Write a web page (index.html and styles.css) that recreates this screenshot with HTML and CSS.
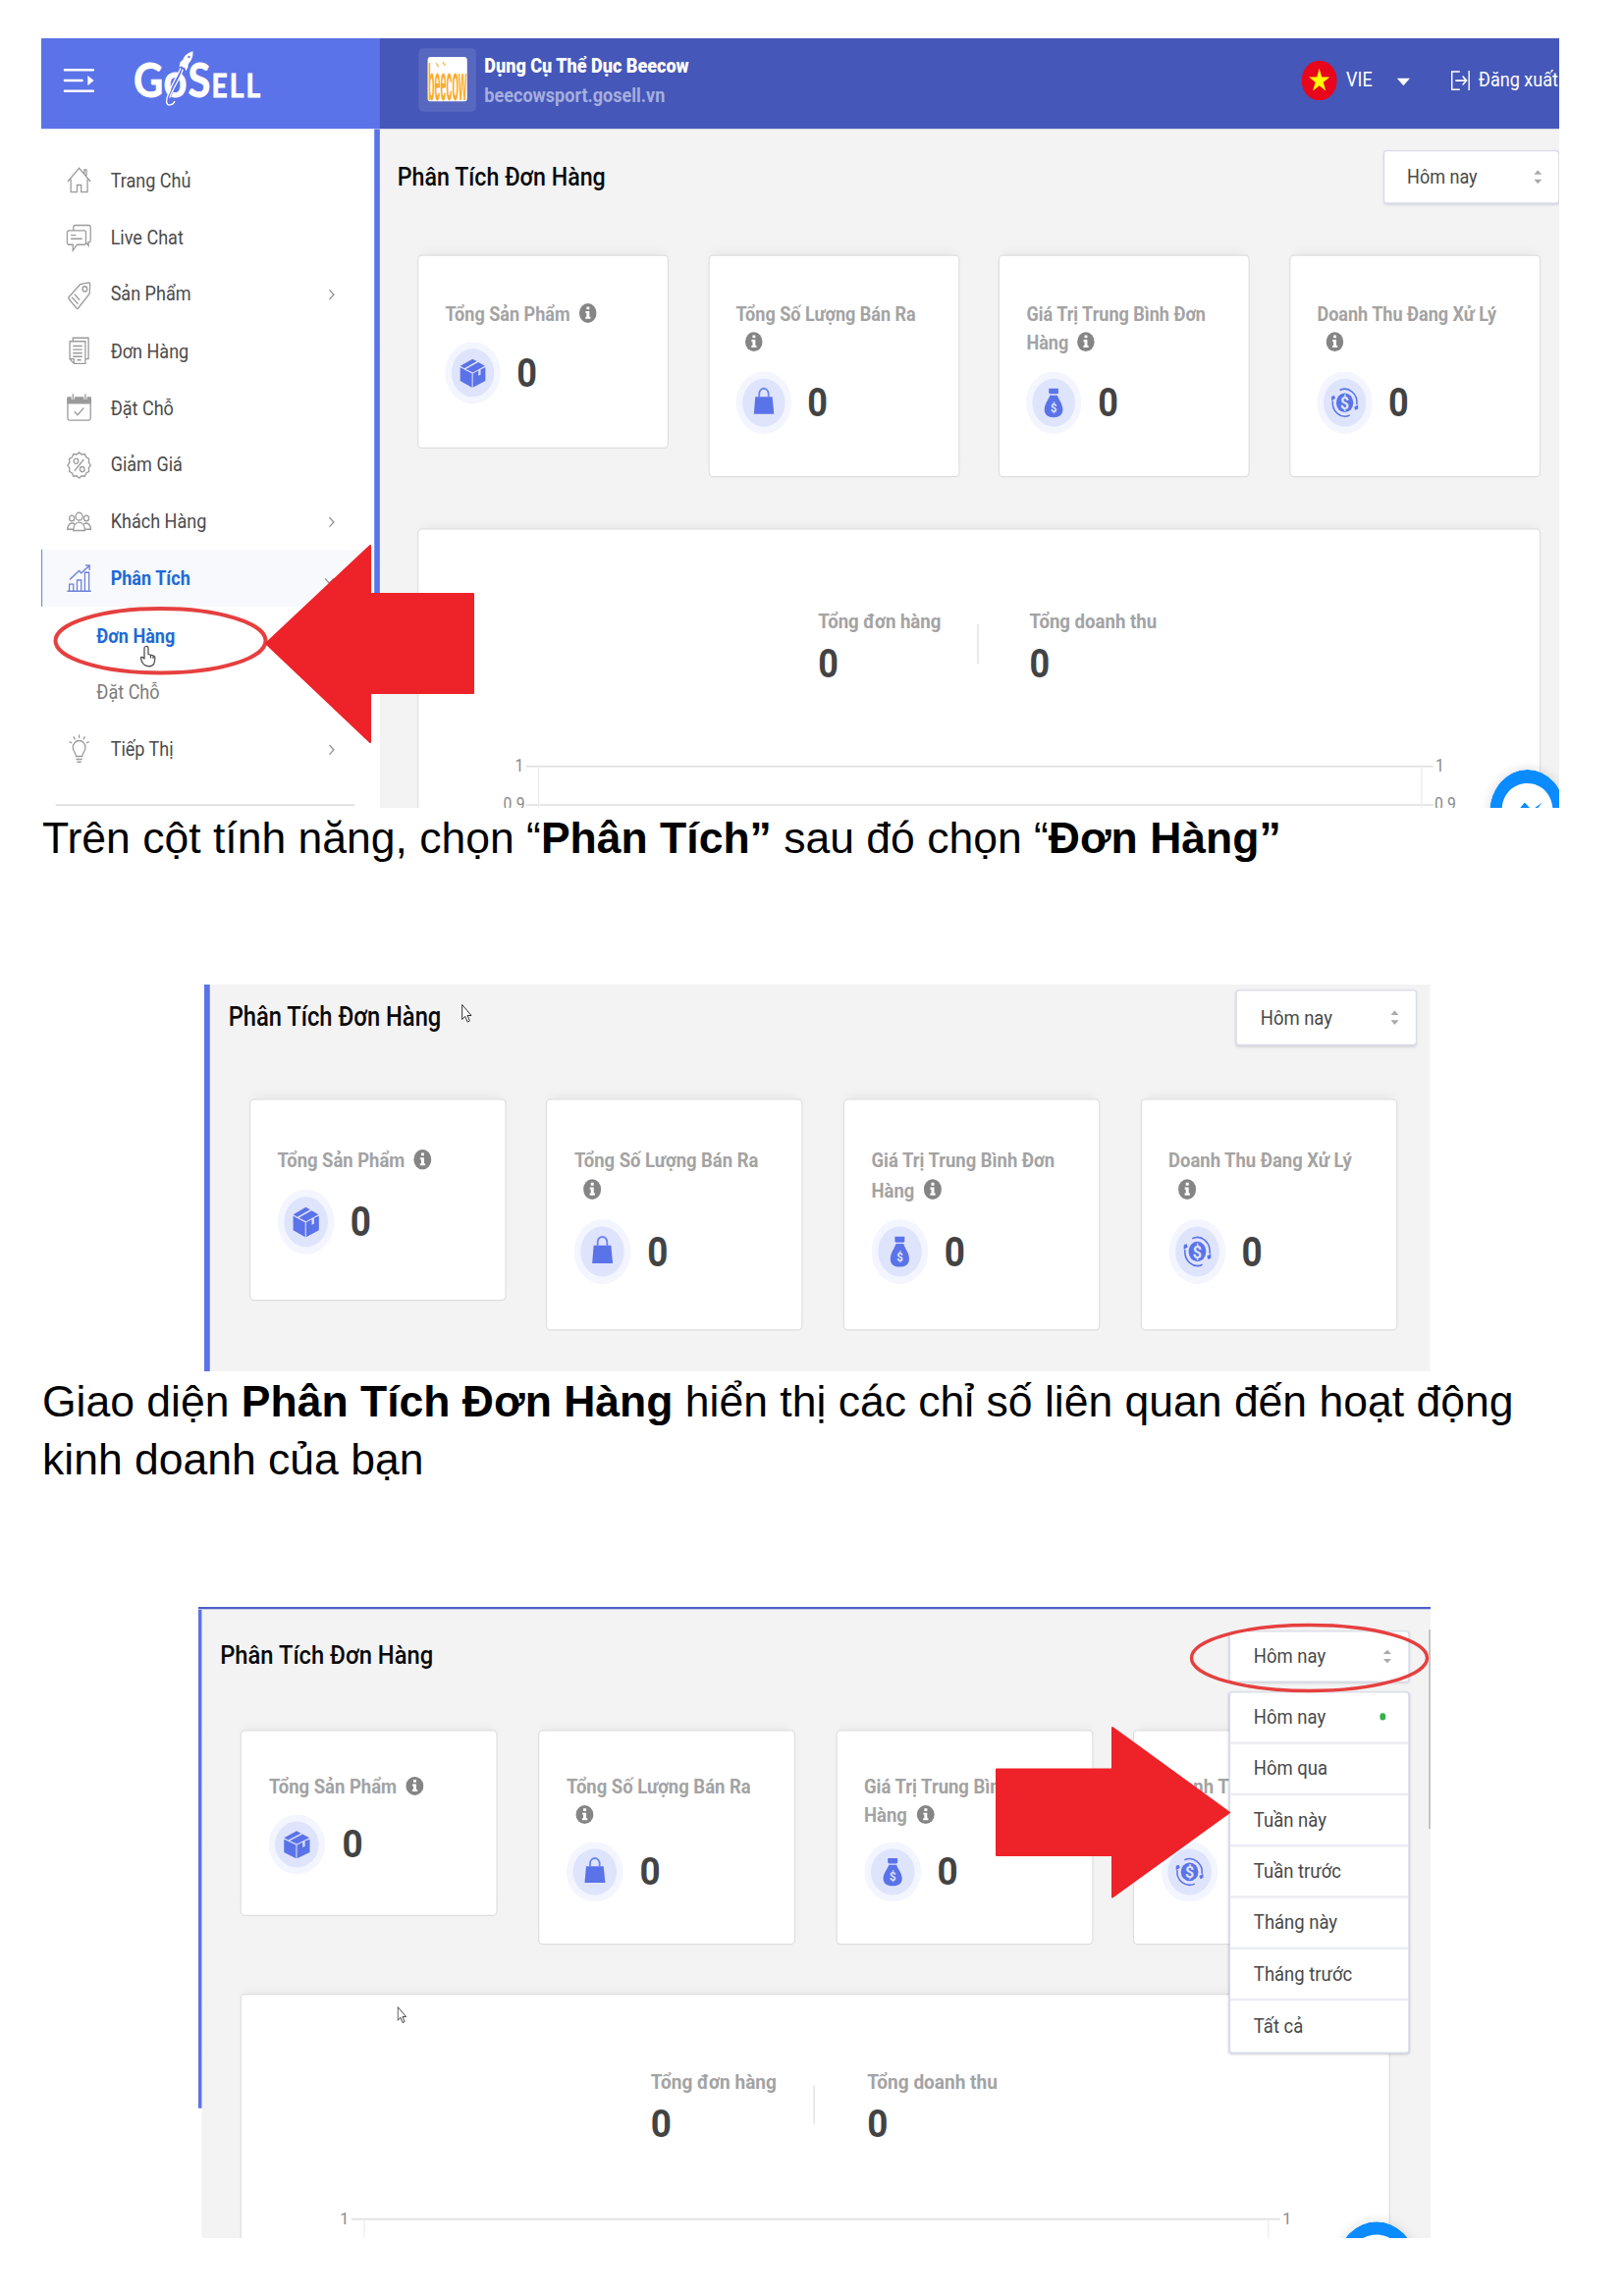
FILE: index.html
```html
<!DOCTYPE html>
<html lang="vi">
<head>
<meta charset="utf-8">
<title>GoSell – Phân Tích Đơn Hàng</title>
<link rel="stylesheet" href="styles.css">
</head>
<body>
<svg class="sprite" width="0" height="0" aria-hidden="true">
  <symbol id="info" viewBox="0 0 16 16"><circle cx="8" cy="8" r="7.8" fill="#858585"/><path fill="#fff" d="M6.8 2.8h2.6v2.2H6.8zM5.9 6.4h3.5v4.6h1v1.6H5.8V11h1V8h-.9z"/></symbol>
  <symbol id="halo" viewBox="0 0 50 50"><circle cx="25" cy="25" r="25" fill="#f3f5ff"/><circle cx="25" cy="25" r="19.3" fill="#dfe4fd"/></symbol>
  <symbol id="box" viewBox="0 0 50 50"><use href="#halo"/><path fill="#5b73e8" d="M24.8 13.800 28.600 15.700 17.300 21.300l-3.600-1.900zM30 16.400l6 3-11 5.300-6.300-2.800zM13.600 20.600l10.600 4.900v11.300l-10.600-5.300zM36.400 20.600v10.900l-11.300 5.300V25.500l5-2.400v4.300l2-.9v-4.400z"/></symbol>
  <symbol id="bag" viewBox="0 0 50 50"><use href="#halo"/><path fill="#5b73e8" d="M17.300 20.300h15.400L34.200 34H16z"/><path fill="none" stroke="#6f84ee" stroke-width="1.600" d="M20.800 21v-3.200a4.200 4.200 0 0 1 8.400 0V21"/></symbol>
  <symbol id="money" viewBox="0 0 50 50"><use href="#halo"/><path fill="#5b73e8" d="M20.600 13.500h8.600v3.800l-1 .7h-6.600l-1-.7zM21.600 19h6.600c1.600 4 5 7 5 11.600 0 4.200-3.300 6.200-8.300 6.200s-8.300-2-8.300-6.200C16.600 26 20 23 21.600 19z"/></symbol>
  <symbol id="revenue" viewBox="0 0 50 50"><use href="#halo"/><circle cx="25" cy="25" r="7.700" fill="#5b73e8"/><g fill="none" stroke="#5b73e8" stroke-width="1.300"><path d="M20.500 15A11 11 0 0 1 35.900 26.500M29.500 35A11 11 0 0 1 14.100 23.500"/></g><path fill="#5b73e8" d="m33.500 28.500 3.500-2v3.500l-2.500 1zM16.500 21.500l-3.500 2V20l2.500-1z"/></symbol>
  <symbol id="pointer" viewBox="0 0 11 20"><path fill="#fff" stroke="#333" stroke-width="1" d="M.7 1v15l3-3.200 2.500 5.800 2.200-1.200L6 12h4z"/></symbol>
</svg>

<main class="doc">
  <!-- Step 1: sidebar navigation -->
  <figure class="shot shot-1">
    <div class="screen">
      <header class="topbar">
        <div class="brand">
          <svg class="burger" width="28" height="20" viewBox="0 0 28 20"><g stroke="#fff" stroke-width="2" stroke-linecap="round"><path d="M1 1.500h26M1 10h16M1 18.500h26"/></g><path fill="#fff" d="m22 6 5.500 4-5.500 4z"/></svg>
          <div class="logo"><span class="lg">G</span><span class="lg lo">o</span><span class="lg">S</span><span class="sm">ELL</span>
            <svg class="rocket" width="26" height="45" viewBox="0 0 26 45"><path fill="none" stroke="#5b73e8" stroke-width="2.400" d="M15 15C11 24 5 33 3 40"/><path fill="none" stroke="#fff" stroke-width="1.100" d="M14 14C9 24 1 34 1.200 41c.5 4 6 3 7.500-.5M16 15C13 24 6 31 4 38"/><path fill="#fff" d="M25 .5c-4 .8-7.500 3.200-8.800 6.500l-2.700 2.300-.8 4 2-1 1.500 1.200 1.800.6.600 2.400 2-3 .3-2.800C24 8 25.500 4 25 .5z"/><circle cx="21.500" cy="5" r="1" fill="#5b73e8"/></svg>
          </div>
        </div>
        <div class="shop">
          <div class="avatar"><svg width="36" height="36" viewBox="0 0 36 36"><rect width="36" height="36" rx="3" fill="#fff"/><g transform="translate(.5 35) scale(1 3.100)"><text x="0" y="0" textLength="35" lengthAdjust="spacingAndGlyphs" class="beecow">beecow</text></g><path stroke="#fbb84a" stroke-width="1.200" d="m8 5 2 3M14 4l2 3"/></svg></div>
          <div class="shop-text"><b>Dụng Cụ Thể Dục Beecow</b><span>beecowsport.gosell.vn</span></div>
        </div>
        <div class="account">
          <svg class="flag" width="32" height="32" viewBox="0 0 32 32"><circle cx="16" cy="16" r="16" fill="#e8061c"/><path fill="#ff0" d="m16 6.300 2.200 6.900h7.200l-5.800 4.200 2.200 6.900-5.800-4.300-5.800 4.300 2.200-6.900-5.800-4.200h7.200z"/></svg>
          <span class="lang">VIE</span>
          <svg class="caret" width="12" height="6" viewBox="0 0 12 6"><path fill="#fff" d="M0 0h12L6 6z"/></svg>
          <svg class="exit" width="17" height="16" viewBox="0 0 17 16"><path fill="none" stroke="#fff" stroke-width="1.300" d="M8 .8H.8v14.400H8M4 8h10M10.500 4.500 14 8l-3.500 3.500M16.300 0v16"/></svg>
          <span>Đăng xuất</span>
        </div>
      </header>
      <div class="body">
        <nav class="side">
          <a><svg viewBox="0 0 24 24"><path d="M1 13 12 1.500 23 13M4 11v11h6v-6h4v6h6V11M17 6V3h2v5"/></svg>Trang Chủ</a>
          <a><svg viewBox="0 0 24 24"><path d="M2 6h15a1.500 1.500 0 0 1 1.500 1.500v9A1.500 1.500 0 0 1 17 18h-7l-4 5v-5H2a1.500 1.500 0 0 1-1.500-1.500v-9A1.500 1.500 0 0 1 2 6zM6.500 6V3A1.500 1.500 0 0 1 8 1.500h13.500A1.500 1.500 0 0 1 23 3v11.500a1.500 1.500 0 0 1-1.500 1.500H21v3l-2.500-3M4 10h5M4 13h11"/></svg>Live Chat</a>
          <a><svg viewBox="0 0 24 24"><path d="M13 3l8-1.500c1 0 1.500.5 1.500 1.500l-.500 8L11 23.500c-.5.500-1 .5-1.500 0l-7.500-8c-.5-.5-.5-1 0-1.500z"/><circle cx="17.500" cy="7" r="2.200"/><path d="m5 14 6 6M7.500 11.500l5 5"/></svg>Sản Phẩm<i></i></a>
          <a><svg viewBox="0 0 24 24"><path d="M3 4h15v19H7l-4-4zM3 19h4v4M6 4V1h15v18h-3M6 8h9M6 11h9M6 14h9M6 17h9M10 20h4"/></svg>Đơn Hàng</a>
          <a><svg viewBox="0 0 24 24"><path fill="#9a9a9a" d="M1 3h22v5H1z"/><path d="M1 4v17a1.500 1.500 0 0 0 1.500 1.500h19A1.500 1.500 0 0 0 23 21V4"/><path stroke="#fff" stroke-width="3" d="M6 0v4.500M18 0v4.500"/><path d="M6 0v4.500M18 0v4.500M7.500 15l3 3 6-6"/></svg>Đặt Chỗ</a>
          <a><svg viewBox="0 0 24 24"><path d="m12 1 2.500 1.800 3-.3 1.300 2.700 2.700 1.300-.3 3L23 12l-1.800 2.500.3 3-2.700 1.300-1.300 2.700-3-.3L12 23l-2.500-1.800-3 .3-1.300-2.700-2.700-1.300.3-3L1 12l1.800-2.500-.3-3 2.700-1.300 1.300-2.700 3 .3z"/><circle cx="9" cy="8.500" r="2.200"/><circle cx="15" cy="15.500" r="2.200"/><path d="m7.500 17 9-10"/></svg>Giảm Giá</a>
          <a><svg viewBox="0 0 24 24"><circle cx="12" cy="8" r="3.300"/><circle cx="5" cy="9.500" r="2.400"/><circle cx="19" cy="9.500" r="2.400"/><path d="M6.500 20c0-4 2-7 5.500-7s5.500 3 5.500 7zM7.500 14.500C4 12.500.8 15 .8 19H6M16.500 14.500c3.500-2 6.700.5 6.700 4.500H18"/></svg>Khách Hàng<i></i></a>
          <a class="on"><svg viewBox="0 0 24 24"><path d="M2.500 23v-6h4v6M10 23v-9.500h4V23M17.500 23V7h4v16M.5 23h23M3 13l9-7.500 2 2L22 1M18 .8h4V5"/></svg>Phân Tích<i class="down"></i></a>
          <a class="sub cur">Đơn Hàng</a>
          <a class="sub">Đặt Chỗ</a>
          <a><svg viewBox="0 0 24 24"><path d="M9 18.500c0-3-3-4-3-7.500a6 6 0 0 1 12 0c0 3.500-3 4.500-3 7.500zM9 21h6M10 23.300h4M12 0v3M6.500 1.500 8 4M17.500 1.500 16 4M2.500 6l2.500 1M21.500 6 19 7"/></svg>Tiếp Thị<i></i></a>
          <hr>
        </nav>
        <div class="rail"></div>
        <section class="main">
          <div class="head"><h1>Phân Tích Đơn Hàng</h1><div class="select">Hôm nay<svg width="7" height="11" viewBox="0 0 7 11"><path fill="#aaa" d="M0 3.500 3.500 0 7 3.500zM0 7.500h7L3.500 11z"/></svg></div></div>
          <div class="cards">
            <div class="card"><p>Tổng Sản Phẩm<svg class="info"><use href="#info"/></svg></p><div class="val"><svg><use href="#box"/></svg>0</div></div>
            <div class="card"><p>Tổng Số Lượng Bán Ra<svg class="info"><use href="#info"/></svg></p><div class="val"><svg><use href="#bag"/></svg>0</div></div>
            <div class="card"><p>Giá Trị Trung Bình Đơn Hàng<svg class="info"><use href="#info"/></svg></p><div class="val"><svg viewBox="0 0 50 50"><use href="#money"/><text x="25" y="32.500" class="coin coin-sm">$</text></svg>0</div></div>
            <div class="card"><p>Doanh Thu Đang Xử Lý<svg class="info"><use href="#info"/></svg></p><div class="val"><svg viewBox="0 0 50 50"><use href="#revenue"/><text x="25" y="30" class="coin">$</text></svg>0</div></div>
          </div>
          <div class="panel">
            <div class="stats"><div class="stat"><p>Tổng đơn hàng</p><b>0</b></div><div class="rule"></div><div class="stat"><p>Tổng doanh thu</p><b>0</b></div></div>
            <svg class="chart" width="1014" height="120" viewBox="0 0 1014 120"><path stroke="#dedede" stroke-width="1.200" d="M97 20.500h820M97 51.500h820"/><path stroke="#ebebeb" d="M108.500 21v99M906.500 21v99"/><text x="95" y="24.500" text-anchor="end">1</text><text x="919" y="24.500">1</text><text x="96" y="55.200" text-anchor="end">0.9</text><text x="918" y="55.200">0.9</text></svg>
          </div>
        </section>
      </div>
      <svg class="messenger" width="68" height="68" viewBox="0 0 68 68"><circle cx="34" cy="34" r="34" fill="#0a8cff"/><path fill="#fff" d="M34 11C20.500 11 11 20.500 11 33c0 7 3 12.500 8 16.500V58l7.500-4.200c2.300.7 4.800 1 7.500 1 13.500 0 23-9.500 23-21.800S47.500 11 34 11z"/><path fill="#0a8cff" d="m20.500 38.500 11-12 6.500 6 9.500-6-11 12-6.500-6z"/></svg>
    </div>
    <svg class="notes" width="1546" height="784" viewBox="42 39 1546 784">
      <ellipse cx="163.500" cy="652.700" rx="107" ry="32.700" fill="none" stroke="#e5403f" stroke-width="4"/>
      <path fill="#ee2229" stroke="#ee2229" stroke-width="2" stroke-linejoin="round" d="M271 655.500 377 556v49h105v101H377v50z"/>
      <path fill="#fff" stroke="#444" stroke-width="1.200" stroke-linejoin="round" d="M148.500 658.500c1.700-.5 2.500.5 2.500 2v6l5.500 1.500c1.200.5 1.600 1.500 1.400 3l-1 5c-1 2-2.500 2.800-5 2.800-4 0-6-1.500-7.500-5l-1-3.500c.5-1.600 2-1.200 3.600.8v-11c0-1 .5-1.500 1.500-1.600zM153.500 667.500v3M156 668.500v2.500"/>
    </svg>
  </figure>
  <p class="caption">Trên cột tính năng, chọn “<b>Phân Tích”</b> sau đó chọn “<b>Đơn Hàng”</b></p>

  <!-- Step 2: the indicator cards -->
  <figure class="shot shot-2">
    <div class="screen">
      <div class="body">
        <div class="rail"></div>
        <section class="main">
          <div class="head"><h1>Phân Tích Đơn Hàng</h1><div class="select">Hôm nay<svg width="7" height="11" viewBox="0 0 7 11"><path fill="#aaa" d="M0 3.500 3.500 0 7 3.500zM0 7.500h7L3.500 11z"/></svg></div></div>
          <div class="cards">
            <div class="card"><p>Tổng Sản Phẩm<svg class="info"><use href="#info"/></svg></p><div class="val"><svg><use href="#box"/></svg>0</div></div>
            <div class="card"><p>Tổng Số Lượng Bán Ra<svg class="info"><use href="#info"/></svg></p><div class="val"><svg><use href="#bag"/></svg>0</div></div>
            <div class="card"><p>Giá Trị Trung Bình Đơn Hàng<svg class="info"><use href="#info"/></svg></p><div class="val"><svg viewBox="0 0 50 50"><use href="#money"/><text x="25" y="32.500" class="coin coin-sm">$</text></svg>0</div></div>
            <div class="card"><p>Doanh Thu Đang Xử Lý<svg class="info"><use href="#info"/></svg></p><div class="val"><svg viewBox="0 0 50 50"><use href="#revenue"/><text x="25" y="30" class="coin">$</text></svg>0</div></div>
          </div>
        </section>
      </div>
    </div>
    <svg class="notes" width="1249" height="394" viewBox="208 1003 1249 394"><use href="#pointer" x="470" y="1022.500" width="11" height="20"/></svg>
  </figure>
  <p class="caption caption-2">Giao diện <b>Phân Tích Đơn Hàng</b> hiển thị các chỉ số liên quan đến hoạt động<br>kinh doanh của bạn</p>

  <!-- Step 3: the period menu -->
  <figure class="shot shot-3">
    <div class="screen">
      <div class="body">
        <div class="rail"></div>
        <section class="main">
          <div class="head"><h1>Phân Tích Đơn Hàng</h1>
            <div class="select">Hôm nay<svg width="7" height="11" viewBox="0 0 7 11"><path fill="#aaa" d="M0 3.500 3.500 0 7 3.500zM0 7.500h7L3.500 11z"/></svg>
              <ul class="menu"><li class="sel">Hôm nay</li><li>Hôm qua</li><li>Tuần này</li><li>Tuần trước</li><li>Tháng này</li><li>Tháng trước</li><li>Tất cả</li></ul>
            </div>
          </div>
          <div class="cards">
            <div class="card"><p>Tổng Sản Phẩm<svg class="info"><use href="#info"/></svg></p><div class="val"><svg><use href="#box"/></svg>0</div></div>
            <div class="card"><p>Tổng Số Lượng Bán Ra<svg class="info"><use href="#info"/></svg></p><div class="val"><svg><use href="#bag"/></svg>0</div></div>
            <div class="card"><p>Giá Trị Trung Bình Đơn Hàng<svg class="info"><use href="#info"/></svg></p><div class="val"><svg viewBox="0 0 50 50"><use href="#money"/><text x="25" y="32.500" class="coin coin-sm">$</text></svg>0</div></div>
            <div class="card"><p>Doanh Thu Đang Xử Lý<svg class="info"><use href="#info"/></svg></p><div class="val"><svg viewBox="0 0 50 50"><use href="#revenue"/><text x="25" y="30" class="coin">$</text></svg>0</div></div>
          </div>
          <div class="panel">
            <div class="stats"><div class="stat"><p>Tổng đơn hàng</p><b>0</b></div><div class="rule"></div><div class="stat"><p>Tổng doanh thu</p><b>0</b></div></div>
            <svg class="chart" width="1014" height="120" viewBox="0 0 1014 120"><path stroke="#dedede" stroke-width="1.200" d="M97 18h820"/><path stroke="#ebebeb" d="M108.500 19v101M906.500 19v101"/><text x="95" y="22.500" text-anchor="end">1</text><text x="919" y="22.500">1</text></svg>
          </div>
        </section>
      </div>
      <svg class="messenger" width="68" height="68" viewBox="0 0 68 68"><circle cx="34" cy="34" r="34" fill="#0a8cff"/><path fill="#fff" d="M34 11C20.500 11 11 20.500 11 33h46C57 20.500 47.500 11 34 11z"/></svg>
      <div class="scroll"></div>
    </div>
    <svg class="notes" width="1255" height="643" viewBox="202 1637 1255 643">
      <ellipse cx="1333.500" cy="1689" rx="120" ry="33.500" fill="none" stroke="#e5403f" stroke-width="3.400"/>
      <path fill="#ee2229" stroke="#ee2229" stroke-width="2" stroke-linejoin="round" d="M1252 1846.500 1133 1760v42.500h-118v87.500h118v42.500z"/>
      <use href="#pointer" x="404.500" y="2043.500" width="10" height="18.500"/>
    </svg>
  </figure>
</main>
</body>
</html>
```
FILE: styles.css
```css
* { box-sizing: border-box; }
body { margin: 0; background: #fff; font-family: Roboto, "Noto Sans", sans-serif; }
p, h1, ul, figure { margin: 0; padding: 0; }
.sprite { position: absolute; }
.doc { display: flow-root; height: 2339px; overflow: hidden; }

/* Each shot is laid out in app pixels, then stretched to its slot on the page. */
.shot { position: relative; overflow: hidden; }
.screen {
  position: relative;
  transform-origin: 0 0;
  font-size: 16px;
  color: #444;
  overflow: hidden;
  display: flex;
  flex-direction: column;
}
.shot-1 { width: 1546px; height: 784px; margin: 39px 0 0 42px; }
.shot-1 .screen { width: 1371.8px; height: 619px; transform: scale(1.127, 1.267); }
.shot-2 { width: 1249px; height: 394px; margin: 120px 0 0 208px; }
.shot-2 .screen { width: 1084.3px; height: 299px; transform: scale(1.152, 1.3205); }
.shot-3 { width: 1255px; height: 643px; margin: 121px 0 0 202px; }
.shot-3 .screen { width: 1087.8px; height: 529px; transform: scale(1.1538, 1.216); border-top: 2.2px solid #4c5fc6; }
.notes { position: absolute; left: 0; top: 0; }

.caption {
  margin: 1px 0 0 43px;
  font: 44.5px/59px "Liberation Sans", Arial, sans-serif;
  color: #000;
  white-space: nowrap;
}

/* Top bar */
.topbar { display: flex; height: 72.600px; flex: none; background: #4557b8; color: #fff; }
.brand { width: 306px; background: #5b73e8; display: flex; align-items: center; padding-left: 19.500px; }
.burger { flex: none; margin-top: -5px; }
.logo { position: relative; margin-left: 36px; margin-top: -2px; font-family: Lato, sans-serif; font-weight: 700; line-height: 44px; white-space: nowrap; display: flex; align-items: baseline; -webkit-text-stroke: .6px #fff; }
.lg { font-size: 37px; }
.lo { margin: 0 1px 0 0; }
.sm { font-size: 25px; letter-spacing: 1.800px; margin-left: 1px; }
.rocket { position: absolute; left: 28px; top: -1.500px; }
.shop { display: flex; align-items: center; padding: 0 0 6px 34.500px; flex: 1; }
.avatar { width: 52px; height: 51px; border-radius: 4px; background: #5868c0; display: flex; align-items: center; justify-content: center; }
.beecow { font: 700 13px "Liberation Sans", Arial, sans-serif; fill: #fbab2b; }
.shop-text { margin: 1.500px 0 0 8px; display: flex; flex-direction: column; line-height: 23.500px; font-weight: 700; }
.shop-text span { color: #a5aedf; }
.account { display: flex; align-items: center; padding-bottom: 5px; margin-right: 1px; }
.lang { margin-left: 8px; }
.caret { margin: 2px 37px 0 22px; }
.exit { margin-right: 8px; }

/* Sidebar */
.body { display: flex; flex: 1; min-height: 0; background: #f3f3f3; }
.side { width: 300.500px; flex: none; background: #fff; padding-top: 18.800px; }
.side a { display: flex; align-items: center; height: 45.700px; padding-top: .6px; padding-left: 22.800px; color: #4b4b4b; border-left: 1px solid transparent; margin-left: -1px; }
.side svg { width: 22.500px; height: 22.500px; margin-right: 17.400px; fill: none; stroke: #9a9a9a; stroke-width: 1.200; overflow: visible; }
.side i { width: 5.500px; height: 5.500px; border: solid #8c8c8c; border-width: 1.800px 1.800px 0 0; transform: rotate(45deg); margin-left: auto; margin-right: 37px; }
.side i.down { transform: rotate(135deg); }
.side .on { margin-left: 0; padding-left: 21.800px; background: #f7f9fd; border-color: #6a95d6; color: #2268d6; font-weight: 700; }
.side .on svg { stroke: #6d80d8; }
.side .sub { padding-left: 50px; color: #7c7c7c; }
.side .sub.cur { color: #2268d6; font-weight: 700; }
.side hr { margin: 22.500px 18px 0 13px; border: 0; border-top: 1px solid #d4d4d4; }
.rail { width: 5.400px; flex: none; background: linear-gradient(#5b73e8, #5b73e8) 0 0 / 100% 418px no-repeat #fff; }
.shot-3 .rail { width: 3.200px; }

/* Report pane */
.main { flex: none; width: 1066.300px; padding: 17.600px 0 0 16px; }
.shot-2 .main { padding-top: 4px; }
.head { display: flex; align-items: center; justify-content: space-between; height: 43px; }
h1 { font-size: 20.600px; font-weight: 500; color: #0a0a0a; margin-top: -.8px; }
.select { position: relative; display: flex; align-items: center; justify-content: space-between; width: 159.400px; height: 43px; padding: .5px 15px 0 20.500px; background: #fff; border: 1px solid #d9dde8; border-radius: 3px; box-shadow: 0 1px 2px rgba(90, 100, 140, .2); color: #484848; }
.menu { position: absolute; z-index: 2; left: -1px; top: 50px; width: 159.400px; list-style: none; background: #fff; border: 1px solid #d9dde8; border-radius: 3px; box-shadow: 0 1px 2px rgba(90, 100, 140, .3); }
.menu li { height: 43.100px; display: flex; align-items: center; justify-content: space-between; padding: .5px 20px 0 20.500px; border-bottom: 2px solid #ebedf4; }
.menu li:last-child { border: 0; }
.sel::after { content: ""; width: 5px; height: 6px; border-radius: 2px; background: #35b04c; }
.cards { display: flex; align-items: flex-start; justify-content: space-between; padding: 0 17.200px 0 18.200px; margin-top: 40.500px; height: 179px; }
.card, .panel { background: #fff; border: 1px solid #dedede; border-radius: 4px; box-shadow: 0 -6px 8px -4px rgba(0, 0, 0, .05); }
.card { width: 227px; padding: 35.300px 24px 34.500px; }
.card p { line-height: 23.400px; font-weight: 700; color: #a3a3a3; font-size: 16px; }
.info { width: 16px; height: 16px; margin-left: 8px; vertical-align: -2px; }
.val { display: flex; align-items: center; gap: 14.500px; margin-top: 10.800px; font-size: 32px; font-weight: 700; color: #434343; height: 50px; }
.val svg { width: 50px; height: 50px; }
.coin { font: 700 14px Roboto, sans-serif; fill: #dfe4fd; text-anchor: middle; }
.coin-sm { font-size: 10px; }
.panel { margin: 41.500px 17.200px 0 18.200px; height: 400px; }
.stats { display: flex; padding: 62px 0 0 361px; height: 170px; }
.stat { width: 110.500px; white-space: nowrap; }
.stat p { font-size: 16.500px; font-weight: 700; color: #a3a3a3; line-height: 24px; }
.stat b { display: block; font-size: 32px; font-weight: 700; line-height: 45px; color: #434343; }
.rule { width: 1px; height: 32px; background: #d8d8d8; margin: 14px 46.500px 0 33px; }
.chart { display: block; }
.chart text { font-size: 14px; fill: #8a8a8a; }
.messenger { position: absolute; border-radius: 50%; box-shadow: 0 0 10px rgba(0, 0, 0, .15); }
.shot-1 .messenger { left: 1308.500px; top: 588px; }
.shot-3 .messenger { left: 1005.500px; top: 512.500px; }
.scroll { position: absolute; right: 0; top: 17px; width: 1.500px; height: 167px; background: #c4c4c8; }
```
